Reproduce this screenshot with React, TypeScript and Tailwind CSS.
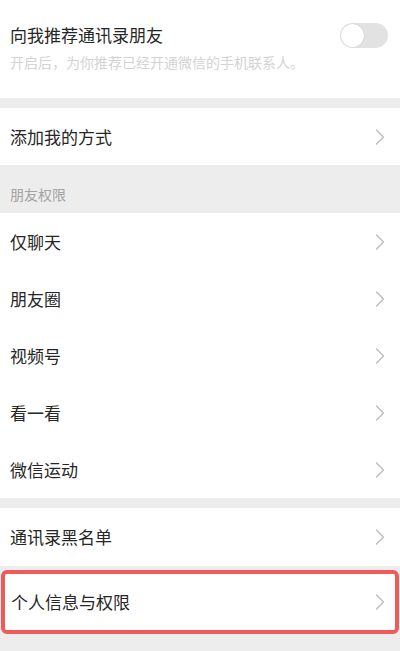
import { ChevronRight } from 'lucide-react';

const font = { fontFamily: '"Noto Sans CJK SC", "Noto Sans", sans-serif' };

function Chevron() {
  return <ChevronRight className="w-[28px] h-[28px] text-[#c0c0c0]" strokeWidth={1.3} />;
}

function Row({ label, height = 'h-[57px]' }: { label: string; height?: string }) {
  return (
    <div className={`flex items-center justify-between bg-white pl-[10px] pr-[6px] ${height}`}>
      <span className="text-[17px] text-[#262626]">{label}</span>
      <Chevron />
    </div>
  );
}

export default function App() {
  const friends = ['仅聊天', '朋友圈', '视频号', '看一看', '微信运动'];
  return (
    <div className="w-[400px] h-[651px] overflow-hidden bg-[#ededed]" style={font}>
      <div className="bg-white h-[98px] pl-[10px] pr-[12px] pt-[22px]">
        <div className="flex items-center justify-between">
          <span className="text-[17px] text-[#262626] leading-[26px]">向我推荐通讯录朋友</span>
          <div className="w-[48px] h-[25px] rounded-full bg-[#e2e2e2] p-[1px] flex items-center">
            <div className="w-[23px] h-[23px] rounded-full bg-white shadow-[0_0_1px_rgba(0,0,0,0.25)]" />
          </div>
        </div>
        <p className="text-[14px] text-[#d3d3d3] mt-[4px] leading-[20px]">开启后，为你推荐已经开通微信的手机联系人。</p>
      </div>
      <div className="h-[10px]" />
      <Row label="添加我的方式" />
      <div className="h-[48px] flex items-end pl-[10px] pb-[8px]">
        <span className="text-[14px] text-[#a3a3a3]">朋友权限</span>
      </div>
      {friends.map((f) => (
        <Row key={f} label={f} />
      ))}
      <div className="h-[10px]" />
      <Row label="通讯录黑名单" height="h-[58px]" />
      <div className="h-[4px]" />
      <div className="border-[4px] border-[#f05a5a] rounded-[6px] mx-[1px] overflow-hidden">
        <div className="flex items-center justify-between bg-white pl-[6px] pr-[1px] h-[56px]">
          <span className="text-[17px] text-[#262626]">个人信息与权限</span>
          <Chevron />
        </div>
      </div>
    </div>
  );
}
